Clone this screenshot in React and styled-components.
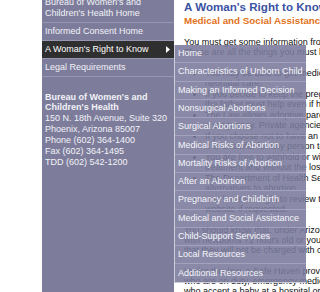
import React from "react";
import styled, { createGlobalStyle } from "styled-components";

const GlobalStyle = createGlobalStyle`
  html, body { margin: 0; padding: 0; background: #ffffff; }
  body { font-family: "Liberation Sans", Arial, Helvetica, sans-serif; overflow: hidden; }
`;

const Page = styled.div`
  display: flex;
  width: 320px;
  height: 292px;
  overflow: hidden;
  background: #ffffff;
`;

const Gutter = styled.div`
  flex: 0 0 42px;
`;

const Sidebar = styled.aside`
  flex: 0 0 132px;
  background: #7d7d9b;
  color: #f2f2f7;
  font-size: 9px;
`;

const NavList = styled.ul`
  list-style: none;
  margin: -6px 0 0;
  padding: 0;
`;

const NavItem = styled.li`
  position: relative;
  border-bottom: 1px solid #9797b1;
`;

const NavLink = styled.a`
  display: flex;
  align-items: center;
  justify-content: space-between;
  padding: 3px 4px 3px 3px;
  line-height: 11px;
  color: #f2f2f7;
  text-decoration: none;
  background: ${(p) => (p.$active ? "#2f2f2f" : "transparent")};
  color: ${(p) => (p.$active ? "#ffffff" : "#f2f2f7")};
`;

const Arrow = styled.svg`
  width: 4px;
  height: 7px;
  flex: 0 0 auto;
`;

const SubMenu = styled.ul`
  position: absolute;
  left: 100%;
  top: 4px;
  z-index: 10;
  width: 131px;
  margin: 0;
  padding: 0;
  list-style: none;
  background: rgba(122, 122, 156, 0.88);
  border-left: 1px solid #cfcfd9;
  border-bottom: 1px solid #cfcfd9;
`;

const SubItem = styled.li`
  border-bottom: 1px solid #a3a3bf;
  &:last-child { border-bottom: none; }
`;

const SubLink = styled.a`
  display: block;
  padding: 3.15px 3px;
  line-height: 11px;
  font-size: 9px;
  color: #f6f6fa;
  text-decoration: none;
  white-space: nowrap;
`;

const Contact = styled.address`
  font-style: normal;
  padding: 14.5px 3px 0;
  line-height: 10.9px;
  color: #f2f2f7;
  white-space: nowrap;
`;

const ContactName = styled.strong`
  display: block;
  font-weight: bold;
`;

const Main = styled.main`
  flex: 0 0 auto;
  width: 420px;
  padding-left: 10px;
  color: #111111;
  font-size: 9px;
`;

const Title = styled.h1`
  margin: 0;
  font-size: 11.6px;
  line-height: 13px;
  font-weight: bold;
  color: #3a52a3;
  white-space: nowrap;
`;

const Subtitle = styled.h2`
  margin: 2px 0 0;
  font-size: 9.8px;
  line-height: 12px;
  font-weight: bold;
  color: #e2721c;
  white-space: nowrap;
`;

const Para = styled.p`
  margin: ${(p) => p.$top || "11px"} 0 0;
  line-height: 10px;
  white-space: nowrap;
`;

const List = styled.ul`
  margin: 11px 0 0;
  padding-left: 21px;
  list-style: disc;
`;

const ListItem = styled.li`
  line-height: 10px;
  margin-bottom: 1px;
  white-space: nowrap;
`;

const submenu = [
  "Home",
  "Characteristics of Unborn Child",
  "Making an Informed Decision",
  "Nonsurgical Abortions",
  "Surgical Abortions",
  "Medical Risks of Abortion",
  "Mortality Risks of Abortion",
  "After an Abortion",
  "Pregnancy and Childbirth",
  "Medical and Social Assistance",
  "Child-Support Services",
  "Local Resources",
  "Additional Resources",
];

export default function App() {
  return (
    <>
      <GlobalStyle />
      <Page>
        <Gutter />
        <Sidebar>
          <NavList>
            <NavItem>
              <NavLink href="#">
                <span>
                  Bureau of Women's and
                  <br />
                  Children's Health Home
                </span>
              </NavLink>
            </NavItem>
            <NavItem>
              <NavLink href="#">Informed Consent Home</NavLink>
            </NavItem>
            <NavItem>
              <NavLink href="#" $active>
                <span>A Woman's Right to Know</span>
                <Arrow viewBox="0 0 4 7">
                  <polygon points="0,0 4,3.5 0,7" fill="#ffffff" />
                </Arrow>
              </NavLink>
              <SubMenu>
                {submenu.map((s) => (
                  <SubItem key={s}>
                    <SubLink href="#">{s}</SubLink>
                  </SubItem>
                ))}
              </SubMenu>
            </NavItem>
            <NavItem>
              <NavLink href="#">Legal Requirements</NavLink>
            </NavItem>
          </NavList>
          <Contact>
            <ContactName>
              Bureau of Women's and
              <br />
              Children's Health
            </ContactName>
            150 N. 18th Avenue, Suite 320
            <br />
            Phoenix, Arizona 85007
            <br />
            Phone (602) 364-1400
            <br />
            Fax (602) 364-1495
            <br />
            TDD (602) 542-1200
          </Contact>
        </Sidebar>
        <Main>
          <Title>A Woman's Right to Know</Title>
          <Subtitle>Medical and Social Assistance</Subtitle>
          <Para $top="10px">
            You must get some information from your doctor at least 24 hours before the abortion.
            <br />
            These are all the things you must be told:
          </Para>
          <List>
            <ListItem>
              You may be able to get medical help for prenatal care, childbirth and
              <br />
              neonatal care.
            </ListItem>
            <ListItem>
              If you decide to keep the pregnancy, know that
              <br />
              the father must help even if he offered to pay for the abortion.
            </ListItem>
            <ListItem>
              The Law allows adoptive parents to pay the costs of
              <br />
              a pregnancy. Private agencies can also help you.
            </ListItem>
            <ListItem>
              If you choose not to have an abortion, agencies can help.
              <br />
              It is unlawful for any person to force you into an abortion.
            </ListItem>
            <ListItem>
              You are free to withhold or withdraw your consent without affecting your care or
              <br />
              treatment and without the loss of any benefits.
            </ListItem>
            <ListItem>
              The Department of Health Services has a website that lists
              <br />
              alternatives to abortion.
            </ListItem>
            <ListItem>
              You have the right to review the information on the state's
              <br />
              website if requested.
            </ListItem>
          </List>
          <Para $top="11px">
            You should know that, under Arizona law, parents
            <br />
            with newborns 72 hours old or younger may leave them safely, and
            <br />
            that they will not be charged with child abuse or neglect.
          </Para>
          <Para $top="11px">
            Under this law, a Safe Haven provider is any hospital or staff
            <br />
            who are on duty, emergency medical technicians and firefighters
            <br />
            who accept a baby at a hospital or fire station.
          </Para>
        </Main>
      </Page>
    </>
  );
}
